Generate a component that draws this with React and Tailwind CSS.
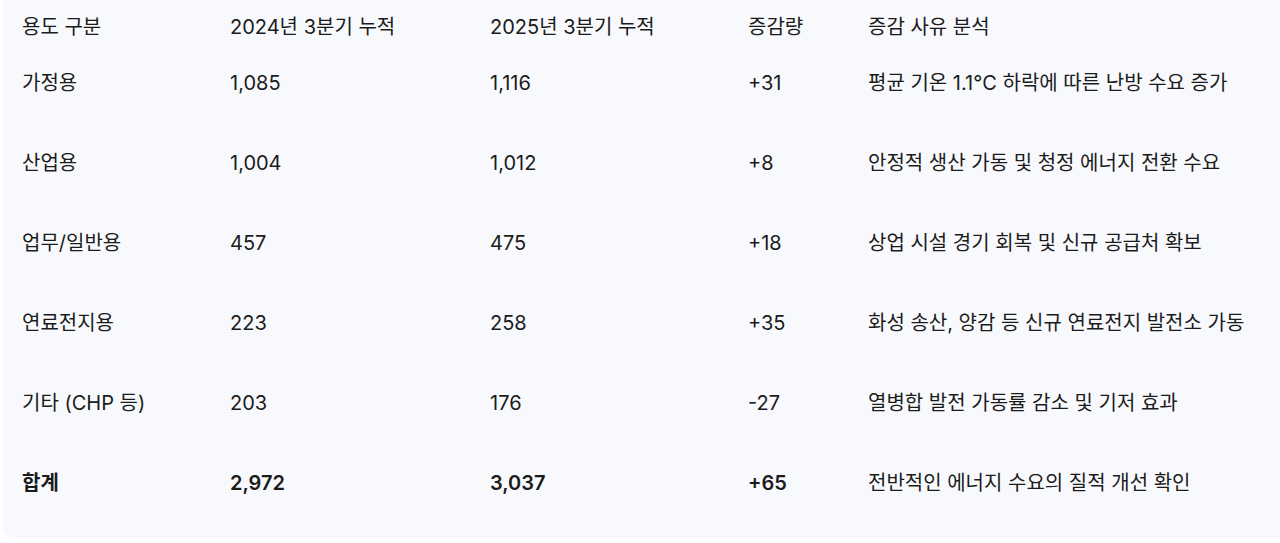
import React from "react";

const rows = [
  ["가정용", "1,085", "1,116", "+31", "평균 기온 1.1°C 하락에 따른 난방 수요 증가"],
  ["산업용", "1,004", "1,012", "+8", "안정적 생산 가동 및 청정 에너지 전환 수요"],
  ["업무/일반용", "457", "475", "+18", "상업 시설 경기 회복 및 신규 공급처 확보"],
  ["연료전지용", "223", "258", "+35", "화성 송산, 양감 등 신규 연료전지 발전소 가동"],
  ["기타 (CHP 등)", "203", "176", "-27", "열병합 발전 가동률 감소 및 기저 효과"],
];

const total = ["합계", "2,972", "3,037", "+65", "전반적인 에너지 수요의 질적 개선 확인"];

const cols = ["w-[208px]", "w-[260px]", "w-[258px]", "w-[120px]", "flex-1"];

function Row({ cells, header, bold }) {
  return (
    <div
      className={
        "flex " +
        (header ? "h-[54px] items-center" : "h-[80px] items-start pt-[15px]")
      }
    >
      {cells.map((c, i) => (
        <div
          key={i}
          className={
            cols[i] +
            " whitespace-nowrap leading-[28px] " +
            (bold && i < 4 ? "font-semibold" : "font-normal")
          }
        >
          {c}
        </div>
      ))}
    </div>
  );
}

export default function App() {
  return (
    <div
      className="w-[1280px] h-[543px] bg-white overflow-hidden text-[20px] text-[#1b1b1b]"
      style={{ fontFamily: 'Inter, "Noto Sans CJK KR", sans-serif' }}
    >
      <div className="ml-[3px] bg-[#f8f9fc] rounded-bl-[10px] pl-[19px] pb-[3px]">
        <Row header cells={["용도 구분", "2024년 3분기 누적", "2025년 3분기 누적", "증감량", "증감 사유 분석"]} />
        {rows.map((r, i) => (
          <Row key={i} cells={r} />
        ))}
        <Row cells={total} bold />
      </div>
    </div>
  );
}
